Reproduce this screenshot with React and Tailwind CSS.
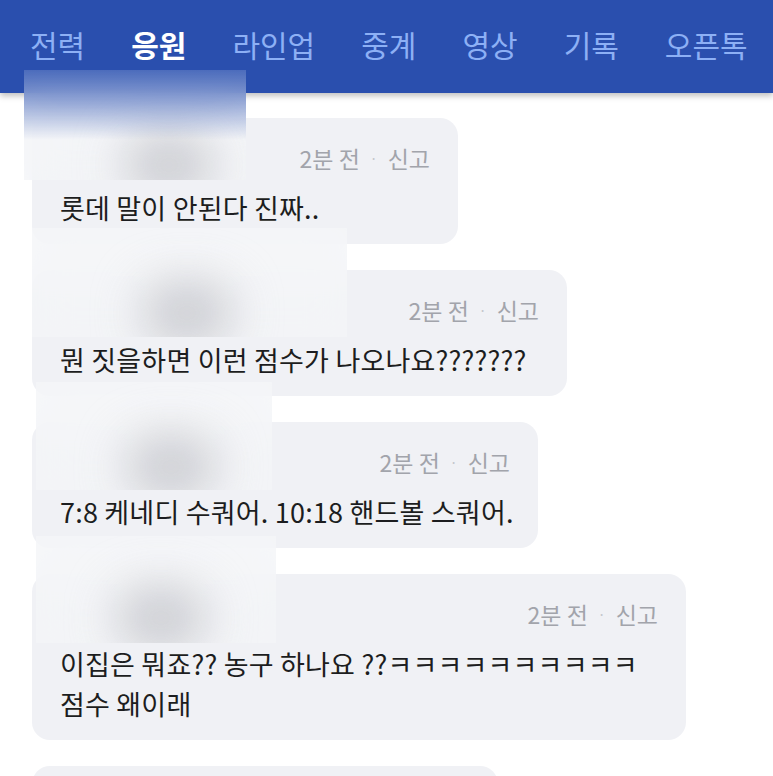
import React from "react";

const tabs = ["전력", "응원", "라인업", "중계", "영상", "기록", "오픈톡"];

const comments = [
  { w: "w-[426px]", lines: ["롯데 말이 안된다 진짜.."] },
  { w: "w-[535px]", lines: ["뭔 짓을하면 이런 점수가 나오나요???????"] },
  { w: "w-[506px]", lines: ["7:8 케네디 수쿼어. 10:18 핸드볼 스쿼어."] },
  { w: "w-[654px]", lines: ["이집은 뭐죠?? 농구 하나요 ??ㅋㅋㅋㅋㅋㅋㅋㅋㅋㅋ", "점수 왜이래"] },
];

// blurred name/avatar boxes covering the start of each comment
const blurs = [
  { cls: "left-[24px] top-[70px] w-[222px] h-[110px]", blob: "left-[100px] top-[65px]" },
  { cls: "left-[32px] top-[228px] w-[315px] h-[109px]", blob: "left-[110px] top-[55px]" },
  { cls: "left-[36px] top-[382px] w-[236px] h-[108px]", blob: "left-[90px] top-[55px]" },
  { cls: "left-[36px] top-[536px] w-[240px] h-[107px]", blob: "left-[80px] top-[52px]" },
];

function Bubble({ w, lines }) {
  return (
    <div className={`${w} rounded-[18px] bg-[#f0f1f5] pt-[24px] pb-[16px] pl-[28px] pr-[28px]`}>
      <div className="flex justify-end items-center text-[23px] leading-[32px] text-[#a2a4ab]">
        <span>2분 전</span>
        <span className="mx-[10px] text-[14px] text-[#c4c6cc]">·</span>
        <span>신고</span>
      </div>
      <div className="mt-[14px] text-[27px] leading-[40px] tracking-[0.2px] text-[#1c1d20] whitespace-nowrap">
        {lines.map((l, i) => (
          <div key={i}>{l}</div>
        ))}
      </div>
    </div>
  );
}

export default function App() {
  return (
    <div
      className="relative w-[773px] h-[776px] overflow-hidden bg-white"
      style={{ fontFamily: '"Noto Sans CJK KR", "Noto Sans", sans-serif' }}
    >
      <div className="relative z-10 h-[93px] bg-[#2a4fae] shadow-[0_3px_6px_rgba(0,0,0,0.25)] flex items-start gap-[46px] pt-[21px] pl-[30px]">
        {tabs.map((t) => (
          <div
            key={t}
            className={
              t === "응원"
                ? "text-[30px] leading-[46px] font-bold text-white"
                : "text-[30px] leading-[46px] text-[#8db0f5]"
            }
          >
            {t}
          </div>
        ))}
      </div>

      <div className="flex flex-col gap-[26px] pl-[32px] pt-[25px]">
        {comments.map((c, i) => (
          <Bubble key={i} {...c} />
        ))}
        <div className="w-[466px] h-[126px] rounded-[18px] bg-[#f0f1f5]" />
      </div>

      {blurs.map((b, i) => (
        <div
          key={i}
          className={`absolute z-20 overflow-hidden backdrop-blur-[20px] bg-[#f4f5f8]/80 ${b.cls}`}
        >
          <div className={`absolute w-[90px] h-[60px] rounded-full bg-[#c9cacf] blur-[24px] ${b.blob}`} />
          {i === 0 && (
            <div className="absolute left-0 top-0 w-full h-[70px] bg-gradient-to-b from-[#4c6cbc] to-transparent" />
          )}
        </div>
      ))}
    </div>
  );
}
